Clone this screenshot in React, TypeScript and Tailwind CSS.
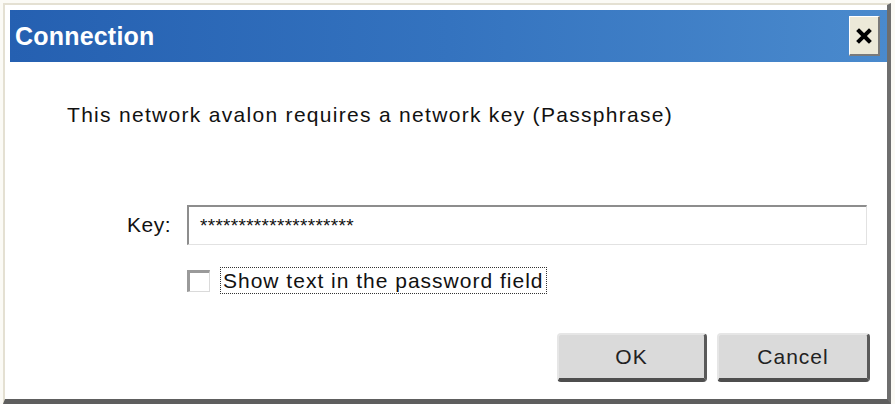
export default function App() {
  return (
    <div className="w-[895px] h-[404px] bg-[#fbfaf5] pt-[3px] pl-[3px] font-['Liberation_Sans',Arial,sans-serif]">
      {/* window frame */}
      <div className="w-[888px] h-[401px] flex flex-col bg-white border-t-2 border-l-2 border-t-[#e4e0d2] border-l-[#e4e0d2] border-r-[4px] border-b-[5px] border-r-[#6e6e6e] border-b-[#5e5e5e] pt-[5px] pl-[5px]">
        {/* title bar */}
        <div className="h-[52px] shrink-0 flex items-center justify-between pl-[5px] pr-[7px] bg-gradient-to-r from-[#2560b1] via-[#3473bf] to-[#4a8acd]">
          <span className="text-white font-bold text-[25px] leading-none tracking-[0.2px]">Connection</span>
          <button className="w-[31px] h-[40px] flex items-center justify-center bg-[#ece9d8] border-t border-l border-t-white border-l-white border-r-2 border-b-2 border-r-[#7a7a7a] border-b-[#7a7a7a]">
            <svg width="16" height="16" viewBox="0 0 16 16">
              <path d="M3 3 L13 13 M13 3 L3 13" stroke="#000" strokeWidth="4" strokeLinecap="square" />
            </svg>
          </button>
        </div>

        {/* body */}
        <div className="flex-1 flex flex-col text-[21px] tracking-[1px] text-[#111]">
          <div className="pt-[41px] pl-[57px] leading-[24px] h-[65px] tracking-[1.3px]">
            This network avalon requires a network key (Passphrase)
          </div>

          <div className="mt-[78px] flex items-center pl-[117px]">
            <span className="w-[60px] leading-[24px] tracking-[0.5px]">Key:</span>
            <div className="w-[680px] h-[40px] flex items-center pl-[11px] bg-white border-t-2 border-l-2 border-t-[#8d8d8d] border-l-[#8d8d8d] border-r border-b border-r-[#e2e2e2] border-b-[#e2e2e2]">
              <span className="text-[19px] tracking-[0.3px] leading-none">********************</span>
            </div>
          </div>

          <div className="mt-[22px] flex items-center pl-[177px] h-[27px]">
            <div className="w-[23px] h-[22px] bg-white border-t-[3px] border-l-[3px] border-t-[#9a9a9a] border-l-[#9a9a9a] border-r border-b border-r-[#dadada] border-b-[#dadada]" />
            <span className="ml-[10px] h-[27px] px-[2px] leading-[25px] border border-dotted border-[#333]">
              Show text in the password field
            </span>
          </div>

          <div className="mt-[39px] flex justify-end gap-[10px] pr-[17px]">
            <button className="w-[150px] h-[49px] flex items-center justify-center bg-[#dadada] rounded-[4px] border-t-2 border-l-2 border-t-[#e6e6e6] border-l-[#e6e6e6] border-r-[3px] border-b-[4px] border-r-[#5a5a5a] border-b-[#4e4e4e] text-[21px] tracking-[1px] text-[#222]">
              OK
            </button>
            <button className="w-[153px] h-[49px] flex items-center justify-center bg-[#dadada] rounded-[4px] border-t-2 border-l-2 border-t-[#e6e6e6] border-l-[#e6e6e6] border-r-[3px] border-b-[4px] border-r-[#5a5a5a] border-b-[#4e4e4e] text-[21px] tracking-[1px] text-[#222]">
              Cancel
            </button>
          </div>
        </div>
      </div>
    </div>
  );
}
